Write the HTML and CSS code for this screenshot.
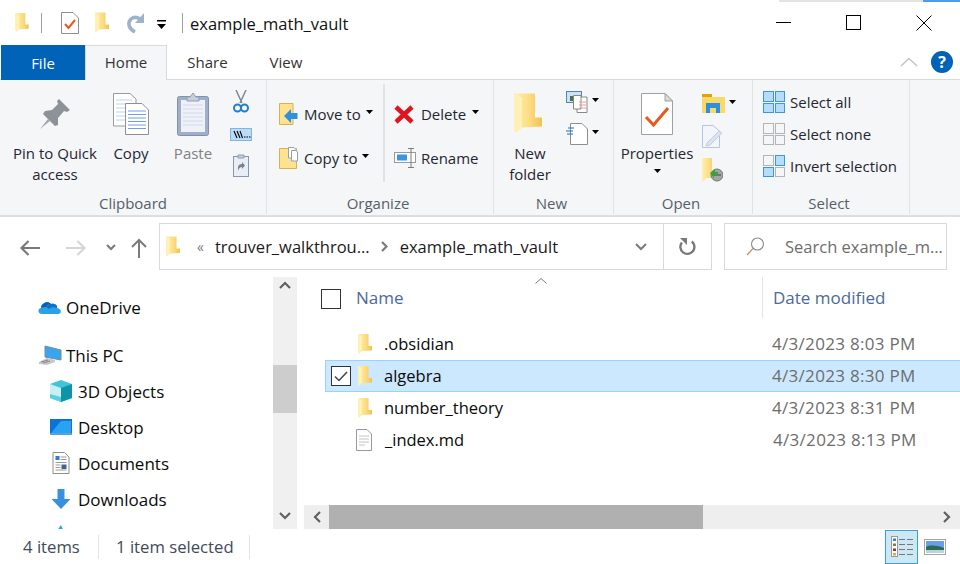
FILE: index.html
```html
<!DOCTYPE html>
<html>
    <head>
        <meta charset="UTF-8">
        <title>example_math_vault</title>
        <link rel="stylesheet" href="styles.css">
    </head>
    <body>
        <svg class="sprites" width="0" height="0">
            <defs>
                <linearGradient id="folderFill" x1="0" y1="0" x2="1" y2="0">
                    <stop offset="0" stop-color="#ffefb0"/>
                    <stop offset="0.55" stop-color="#fcdc80"/>
                    <stop offset="1" stop-color="#f0c252"/>
                </linearGradient>
                <symbol id="folder" viewBox="0 0 14 20">
                    <path d="M0 0H10.5V12H14V16.5L4 17L1.200 19.500L0 18.500Z" fill="url(#folderFill)"/>
                    <path d="M0 0L4 2V17L1.200 19.500L0 18.500Z" fill="#fff0b4"/>
                </symbol>
                <symbol id="caret" viewBox="0 0 9 5">
                    <path d="M0 0H9L4.500 5Z" fill="#000"/>
                </symbol>
                <symbol id="page" viewBox="0 0 32 42">
                    <path d="M.5.5H24L31.500 8V41.500H.5Z" fill="#fff" stroke="#a0a0a0"/>
                    <path d="M24 .5V8H31.500Z" fill="#dcdcdc" stroke="#a0a0a0"/>
                </symbol>
            </defs>
        </svg>

        <div class="strip"><span class="strip-blue"></span></div>

        <header class="titlebar">
            <svg class="qa qa-first" width="14" height="19"><use href="#folder"/></svg>
            <span class="qa-sep"></span>
            <svg class="qa qa-check" width="18" height="22" viewBox="0 0 18 22">
                <path d="M.5.5H12L17.500 6V21.500H.5Z" fill="#fff" stroke="#8f8f8f"/>
                <path d="M4 12L7.500 16L14 8" fill="none" stroke="#e8581c" stroke-width="2"/>
            </svg>
            <svg class="qa qa-folder" width="14" height="21"><use href="#folder"/></svg>
            <svg class="qa qa-undo" width="19" height="22" viewBox="0 0 19 22">
                <path d="M9 20C3 17 1 11 5 7C7.500 5 11 5 14 7" fill="none" stroke="#9fb2cc" stroke-width="3.500"/>
                <path d="M18 1V11H9Z" fill="#9fb2cc"/>
            </svg>
            <svg class="qa qa-more" width="9" height="9" viewBox="0 0 9 9">
                <path d="M0 0H9V1.500H0ZM0 4H9L4.500 9Z" fill="#000"/>
            </svg>
            <span class="qa-sep qa-sep-2"></span>
            <span class="title">example_math_vault</span>
            <div class="win-controls">
                <svg width="16" height="16" viewBox="0 0 16 16"><path d="M0 7.500H15" stroke="#000"/></svg>
                <svg width="16" height="16" viewBox="0 0 16 16"><rect x=".5" y=".5" width="14" height="14" fill="none" stroke="#000"/></svg>
                <svg width="16" height="16" viewBox="0 0 16 16"><path d="M.5.5L15.500 15.500M15.500.5L.5 15.500" stroke="#000"/></svg>
            </div>
        </header>

        <nav class="tabs">
            <span class="tab tab-file">File</span>
            <span class="tab tab-home">Home</span>
            <span class="tab tab-share">Share</span>
            <span class="tab tab-view">View</span>
            <svg class="collapse" width="18" height="10" viewBox="0 0 18 10"><path d="M1 9L9 1.500L17 9" fill="none" stroke="#c4c4c4" stroke-width="1.500"/></svg>
            <span class="help">?</span>
        </nav>

        <section class="ribbon">
            <div class="group group-clipboard">
                <div class="group-body">
                    <div class="big big-pin">
                        <div class="big-icon">
                            <svg width="32" height="32" viewBox="0 0 32 32">
                                <path d="M20 1L31 12L28 14L25 13L19 20L19 27L16 28L4 16L6 13L13 12L19 6L18 3Z" fill="#8c9298"/>
                                <path d="M9 21L1 31L11 23Z" fill="#a2a6ab"/>
                            </svg>
                        </div>
                        <span>Pin to Quick</span>
                        <span>access</span>
                    </div>
                    <div class="big big-copy">
                        <div class="big-icon">
                            <svg width="36" height="42" viewBox="0 0 36 42">
                                <path d="M.5.5H17L23 6V33H.5Z" fill="#fff" stroke="#9a9a9a"/>
                                <path d="M3 7H19M3 11H19M3 15H19M3 19H19M3 23H19M3 27H19" stroke="#bcd0ee"/>
                                <path d="M12.500 10.500H29L35.500 17V41.500H12.500Z" fill="#fff" stroke="#8f8f8f"/>
                                <path d="M15 18H33M15 21.500H33M15 25H33M15 28.500H33M15 32H33M15 35.500H33" stroke="#6f9eea"/>
                            </svg>
                        </div>
                        <span>Copy</span>
                    </div>
                    <div class="big big-paste">
                        <div class="big-icon">
                            <svg width="32" height="44" viewBox="0 0 32 44">
                                <rect x=".5" y="4.500" width="31" height="39" rx="2" fill="#9fafc9" stroke="#8091ad"/>
                                <rect x="4" y="8" width="24" height="32" fill="#eef1f8"/>
                                <path d="M6 13H26M6 17H26M6 21H26M6 25H26M6 29H26M6 33H26" stroke="#d3d9e6"/>
                                <path d="M10 9V5H13L16 1L19 5H22V9Z" fill="#c7cfdd" stroke="#8f9cb3"/>
                            </svg>
                        </div>
                        <span>Paste</span>
                    </div>
                    <div class="clip-tools">
                        <svg width="16" height="23" viewBox="0 0 16 23">
                            <path d="M3 0L9 13M13 0L7 13" stroke="#808a94" stroke-width="1.500"/>
                            <circle cx="4.500" cy="18" r="3.500" fill="none" stroke="#1e81ce" stroke-width="2"/>
                            <circle cx="11.500" cy="18" r="3.500" fill="none" stroke="#1e81ce" stroke-width="2"/>
                        </svg>
                        <svg class="tool-path" width="22" height="13" viewBox="0 0 22 13">
                            <rect x=".5" y=".5" width="21" height="12" fill="#b9dcf9" stroke="#80b5e0"/>
                            <path d="M4 3L7 10M7 3L10 10M10 3L12.500 10" stroke="#000" stroke-width="1.100"/>
                            <path d="M14 9H15.500M16.500 9H18M19 9H20.500" stroke="#000"/>
                        </svg>
                        <svg class="tool-short" width="16" height="23" viewBox="0 0 16 23">
                            <rect x=".5" y="2.500" width="15" height="20" fill="#e9edf6" stroke="#8796b0"/>
                            <path d="M5 4V1H11V4Z" fill="#c7cfdd" stroke="#8f9cb3"/>
                            <path d="M5 17V13C5 11 7 10 9 10V8L12 11.500L9 15V13C7 13 6 14 5 17Z" fill="#7d8288"/>
                        </svg>
                    </div>
                </div>
                <div class="group-label">Clipboard</div>
            </div>

            <div class="group group-organize">
                <div class="group-body">
                    <div class="org-col">
                        <div class="row">
                            <svg class="row-icon" width="19" height="22" viewBox="0 0 19 22">
                                <path d="M.5.500H14V21.500H.5Z" fill="#fde38f" stroke="#d9b24a"/>
                                <path d="M18.500 10H12V6L5 13L12 20V16H18.500Z" fill="#2f8fe0"/>
                            </svg>
                            <span>Move to</span>
                            <svg class="caret" width="7" height="4"><use href="#caret"/></svg>
                        </div>
                        <div class="row">
                            <svg class="row-icon" width="19" height="22" viewBox="0 0 19 22">
                                <path d="M.5 1.500H17.500V21.500H.5Z" fill="#fde38f" stroke="#d9b24a"/>
                                <path d="M9.500.5H15L17.500 3V11H9.500Z" fill="#fff" stroke="#8fa0b8"/>
                                <path d="M12.500 3.500H17L18.500 5V14H12.500Z" fill="#fff" stroke="#8fa0b8"/>
                            </svg>
                            <span>Copy to</span>
                            <svg class="caret" width="7" height="4"><use href="#caret"/></svg>
                        </div>
                    </div>
                    <div class="org-col org-col-2">
                        <div class="row">
                            <svg class="row-icon" width="20" height="19" viewBox="0 0 20 19">
                                <path d="M2 2L18 17M18 2L2 17" stroke="#e0141f" stroke-width="4.500"/>
                            </svg>
                            <span>Delete</span>
                            <svg class="caret caret-delete" width="7" height="4"><use href="#caret"/></svg>
                        </div>
                        <div class="row">
                            <svg class="row-icon row-icon-tight" width="22" height="20" viewBox="0 0 22 20">
                                <rect x=".5" y="4.500" width="21" height="10" fill="#fff" stroke="#9a9a9a"/>
                                <rect x="3" y="6.500" width="10" height="6" fill="#3d95e0"/>
                                <path d="M14 .5H20M17 .5V19.500M14 19.500H20" stroke="#7c7c7c" fill="none"/>
                            </svg>
                            <span>Rename</span>
                        </div>
                    </div>
                </div>
                <div class="group-label">Organize</div>
            </div>

            <div class="group group-new">
                <div class="group-body">
                    <div class="big big-new">
                        <div class="big-icon">
                            <svg width="28" height="41"><use href="#folder"/></svg>
                        </div>
                        <span>New</span>
                        <span>folder</span>
                    </div>
                    <div class="tiny-col">
                        <div class="tiny-row">
                            <svg class="tiny-icon" width="22" height="22" viewBox="0 0 22 22">
                                <rect x=".5" y=".5" width="15" height="11" fill="#c9e4f8" stroke="#4c87b5"/>
                                <path d="M4 10V5H7V10Z" fill="#4f6f4a"/>
                                <path d="M11 6H21V21.500H11Z" fill="#fff" stroke="#888"/>
                                <path d="M7.500 4.500H15V18H7.500Z" fill="#fff" stroke="#888"/>
                                <path d="M13 11H20M13 14H20M13 17H20" stroke="#e59a9a"/>
                            </svg>
                            <svg class="caret" width="7" height="4"><use href="#caret"/></svg>
                        </div>
                        <div class="tiny-row">
                            <svg class="tiny-icon" width="22" height="22" viewBox="0 0 22 22">
                                <path d="M4.500.5H16L21.500 6V21.500H4.500Z" fill="#fff" stroke="#8f8f8f"/>
                                <path d="M2 5H8M0 8H7M1 11H7" stroke="#1d6fc5" stroke-width="1.200"/>
                            </svg>
                            <svg class="caret" width="7" height="4"><use href="#caret"/></svg>
                        </div>
                    </div>
                </div>
                <div class="group-label">New</div>
            </div>

            <div class="group group-open">
                <div class="group-body">
                    <div class="big big-props">
                        <div class="big-icon">
                            <svg width="32" height="42" viewBox="0 0 32 42">
                                <use href="#page"/>
                                <path d="M5 24L12.500 32L27 15" fill="none" stroke="#e8581c" stroke-width="3"/>
                            </svg>
                        </div>
                        <span>Properties</span>
                        <svg class="caret caret-props" width="7" height="4"><use href="#caret"/></svg>
                    </div>
                    <div class="tiny-col tiny-col-open">
                        <div class="tiny-row">
                            <svg class="tiny-icon" width="23" height="19" viewBox="0 0 23 19">
                                <path d="M0 3H10V0H0Z" fill="#e0a30e"/>
                                <path d="M0 3H23V19H0Z" fill="#fbd968"/>
                                <rect x="4" y="9" width="14" height="10" fill="#2d8fe0"/>
                                <rect x="8" y="14" width="6" height="5" fill="#fbd968"/>
                            </svg>
                            <svg class="caret" width="7" height="4"><use href="#caret"/></svg>
                        </div>
                        <div class="tiny-row">
                            <svg class="tiny-icon" width="23" height="23" viewBox="0 0 23 23">
                                <path d="M.5.5H11L17.500 6V22.500H.5Z" fill="#f2f5fb" stroke="#b8c4dc"/>
                                <path d="M5 18L17 6L20 8L8 20L4 21Z" fill="#dbe3f1" stroke="#c2cde0"/>
                            </svg>
                        </div>
                        <div class="tiny-row">
                            <svg class="tiny-icon" width="21" height="24" viewBox="0 0 21 24">
                                <path d="M0 0H10V15H14V20H4L1.500 23.500L0 22Z" fill="url(#folderFill)"/>
                                <circle cx="15" cy="17" r="6" fill="#a4a4a4" stroke="#777"/>
                                <path d="M11 17H19" stroke="#444"/>
                                <path d="M8 15L13 11V14H16V17H12V20Z" fill="#37a43a"/>
                            </svg>
                        </div>
                    </div>
                </div>
                <div class="group-label">Open</div>
            </div>

            <div class="group group-select">
                <div class="group-body group-body-select">
                    <div class="sel-row">
                        <span class="sel-grid">
                            <i class="on"></i><i class="on"></i><i class="on"></i><i class="on"></i>
                        </span>
                        <span>Select all</span>
                    </div>
                    <div class="sel-row">
                        <span class="sel-grid">
                            <i></i><i></i><i></i><i></i>
                        </span>
                        <span>Select none</span>
                    </div>
                    <div class="sel-row">
                        <span class="sel-grid">
                            <i></i><i class="on"></i><i class="on"></i><i></i>
                        </span>
                        <span>Invert selection</span>
                    </div>
                </div>
                <div class="group-label">Select</div>
            </div>
        </section>

        <section class="addressbar">
            <svg class="nav-back" width="20" height="16" viewBox="0 0 20 16"><path d="M20 8H2M8.500 1L1.500 8L8.500 15" fill="none" stroke="#7a7a7a" stroke-width="2.200"/></svg>
            <svg class="nav-fwd" width="20" height="16" viewBox="0 0 20 16"><path d="M0 8H18M11.500 1L18.500 8L11.500 15" fill="none" stroke="#d6d6d6" stroke-width="2.200"/></svg>
            <svg class="nav-down" width="10" height="7" viewBox="0 0 10 7"><path d="M1 1L5 5L9 1" fill="none" stroke="#7a7a7a" stroke-width="2"/></svg>
            <svg class="nav-up" width="16" height="20" viewBox="0 0 16 20"><path d="M8 20V2M1 9L8 2L15 9" fill="none" stroke="#7a7a7a" stroke-width="2"/></svg>
            <div class="pathbox">
                <svg class="path-folder" width="14" height="21"><use href="#folder"/></svg>
                <span class="crumb-more">«</span>
                <span class="crumb">trouver_walkthrou...</span>
                <svg class="crumb-sep" width="7" height="11" viewBox="0 0 7 11"><path d="M1 1L5.500 5.500L1 10" fill="none" stroke="#7a7a7a" stroke-width="2.200"/></svg>
                <span class="crumb">example_math_vault</span>
                <svg class="path-chevron" width="12" height="8" viewBox="0 0 12 8"><path d="M1 1L6 6L11 1" fill="none" stroke="#7a7a7a" stroke-width="2"/></svg>
                <div class="path-refresh">
                    <svg width="17" height="18" viewBox="0 0 17 18">
                        <path d="M3.500 4A7 7 0 1 0 13.500 4" fill="none" stroke="#7a7a7a" stroke-width="2.400" transform="rotate(-6 8.500 10)"/>
                        <path d="M1 0H8V7Z" fill="#7a7a7a"/>
                    </svg>
                </div>
            </div>
            <div class="searchbox">
                <svg width="19" height="19" viewBox="0 0 19 19">
                    <circle cx="11.500" cy="7" r="6" fill="none" stroke="#8c8c8c" stroke-width="1.100"/>
                    <path d="M7 11.500L1 18" stroke="#d48a5a" stroke-width="1.200"/>
                </svg>
                <span>Search example_m...</span>
            </div>
        </section>

        <main class="main">
            <aside class="navpane">
                <div class="tree">
                    <div class="tree-row">
                        <svg width="25" height="16" viewBox="0 0 25 16">
                            <path d="M5 15C1 15 0 10 4 9C4 4 11 1 14 5C18 4 21 7 20 9C25 10 25 15 21 15Z" fill="#29a0e8"/>
                            <path d="M4 9C4 4 11 1 14 5C10 5 9 7 9 8C7 8 5 8 4 9Z" fill="#0a5fb4"/>
                            <path d="M14 5C18 4 21 7 20 9C17 8 14 8 12 10L9 8C9 7 10 5 14 5Z" fill="#0f72c9"/>
                        </svg>
                        <span>OneDrive</span>
                    </div>
                    <div class="tree-row tree-row-pc">
                        <svg width="24" height="21" viewBox="0 0 24 21">
                            <path d="M7 1L23 5V15L7 12Z" fill="#37a6ee" stroke="#7c8a96"/>
                            <path d="M1 17L9 13L17 15L17 17L9 20L1 19Z" fill="#c4c8cc"/>
                            <path d="M3 17L10 15M5 18L12 16" stroke="#888"/>
                        </svg>
                        <span>This PC</span>
                    </div>
                    <div class="tree-row tree-row-child">
                        <svg width="22" height="22" viewBox="0 0 22 22">
                            <path d="M11 0L22 4V18L11 22L0 18V4Z" fill="#3ec5d6"/>
                            <path d="M0 4L11 8V22L0 18Z" fill="#c8f0f4"/>
                            <path d="M11 8L22 4V18L11 22Z" fill="#0e93a8"/>
                            <path d="M0 14L11 17V22L0 18Z" fill="#58d0df"/>
                        </svg>
                        <span>3D Objects</span>
                    </div>
                    <div class="tree-row tree-row-child">
                        <svg width="22" height="16" viewBox="0 0 22 16">
                            <rect width="22" height="16" fill="#0a74d6"/>
                            <path d="M1 14L11 2H21V14Z" fill="#2aa2f2"/>
                            <path d="M0 15H22" stroke="#9fd0f5"/>
                        </svg>
                        <span>Desktop</span>
                    </div>
                    <div class="tree-row tree-row-child">
                        <svg width="22" height="22" viewBox="0 0 17 22">
                            <path d="M.5.5H12L16.500 5V21.500H.5Z" fill="#fff" stroke="#8f8f8f"/>
                            <path d="M3 4H7V8H3Z" fill="#2a7fd0"/>
                            <path d="M8 5H14M8 7.500H14M3 10.500H14M3 13H8M3 15.500H8M3 18H14" stroke="#9a9a9a"/>
                            <path d="M9 12.500H14V17H9Z" fill="#41648a"/>
                        </svg>
                        <span>Documents</span>
                    </div>
                    <div class="tree-row tree-row-child">
                        <svg width="22" height="20" viewBox="0 0 19 20">
                            <path d="M6 0H13V10H19L9.500 20L0 10H6Z" fill="#3a8fe0"/>
                        </svg>
                        <span>Downloads</span>
                    </div>
                    <div class="tree-row tree-row-child">
                        <svg width="22" height="20" viewBox="0 0 19 20">
                            <path d="M9.500 0L13 8V20H4V8Z" fill="#1ea7ee"/>
                        </svg>
                        <span></span>
                    </div>
                </div>
                <div class="vscroll">
                    <svg class="v-arrow" width="12" height="8" viewBox="0 0 12 8"><path d="M1 7L6 2L11 7" fill="none" stroke="#606060" stroke-width="2.200"/></svg>
                    <div class="v-track"><div class="v-thumb"></div></div>
                    <svg class="v-arrow" width="12" height="8" viewBox="0 0 12 8"><path d="M1 1L6 6L11 1" fill="none" stroke="#606060" stroke-width="2.200"/></svg>
                </div>
            </aside>

            <div class="filepane">
                <div class="listhead">
                    <span class="checkbox"></span>
                    <span class="col-name">Name</span>
                    <svg class="sort" width="12" height="6" viewBox="0 0 12 6"><path d="M.5 5.500L6 .5L11.500 5.500" fill="none" stroke="#7a7a7a"/></svg>
                    <span class="col-date">Date modified</span>
                </div>
                <div class="filelist">
                    <div class="file">
                        <span class="check-slot"></span>
                        <svg class="file-icon" width="14" height="20"><use href="#folder"/></svg>
                        <span class="file-name">.obsidian</span>
                        <span class="file-date">4/3/2023 8:03 PM</span>
                    </div>
                    <div class="file file-selected">
                        <span class="check-slot checkbox-on">
                            <svg width="14" height="11" viewBox="0 0 14 11"><path d="M1 5.500L5 9.500L13 1" fill="none" stroke="#444" stroke-width="1.500"/></svg>
                        </span>
                        <svg class="file-icon" width="14" height="20"><use href="#folder"/></svg>
                        <span class="file-name">algebra</span>
                        <span class="file-date">4/3/2023 8:30 PM</span>
                    </div>
                    <div class="file">
                        <span class="check-slot"></span>
                        <svg class="file-icon" width="14" height="20"><use href="#folder"/></svg>
                        <span class="file-name">number_theory</span>
                        <span class="file-date">4/3/2023 8:31 PM</span>
                    </div>
                    <div class="file">
                        <span class="check-slot"></span>
                        <svg class="file-icon" width="16" height="22" viewBox="0 0 16 22">
                            <path d="M.5.5H11L15.500 5V21.500H.5Z" fill="#fff" stroke="#9a9a9a"/>
                            <path d="M3 7H13M3 10H13M3 13H13M3 16H9" stroke="#c4c4c4"/>
                        </svg>
                        <span class="file-name">_index.md</span>
                        <span class="file-date">4/3/2023 8:13 PM</span>
                    </div>
                </div>
                <div class="hscroll">
                    <svg class="h-arrow" width="8" height="12" viewBox="0 0 8 12"><path d="M7 1L2 6L7 11" fill="none" stroke="#606060" stroke-width="2.200"/></svg>
                    <div class="h-thumb"></div>
                    <svg class="h-arrow h-arrow-right" width="8" height="12" viewBox="0 0 8 12"><path d="M1 1L6 6L1 11" fill="none" stroke="#606060" stroke-width="2.200"/></svg>
                </div>
            </div>
        </main>

        <footer class="status">
            <span class="status-count">4 items</span>
            <span class="status-selected">1 item selected</span>
            <span class="status-rule"></span>
            <div class="view-details">
                <svg width="22" height="21" viewBox="0 0 22 21">
                    <rect x=".5" y=".5" width="6" height="20" fill="#fff" stroke="#999"/>
                    <path d="M2 2.500H5V5H2Z" fill="#3f7f9f"/>
                    <path d="M2 7.500H5V10H2Z" fill="#8a7a40"/>
                    <path d="M2 12.500H5V15H2Z" fill="#b0281c"/>
                    <path d="M2 17H5V19.500H2Z" fill="#c8b050"/>
                    <path d="M8 3.500H14M16 3.500H22M8 8.500H14M16 8.500H22M8 13.500H14M16 13.500H22M8 18.500H14M16 18.500H22" stroke="#777"/>
                </svg>
            </div>
            <svg class="view-large" width="22" height="16" viewBox="0 0 22 16">
                <rect x=".5" y=".5" width="21" height="15" fill="#fff" stroke="#a4a4a4"/>
                <rect x="2" y="2" width="18" height="12" fill="#6b9ee8"/>
                <path d="M2 8C6 6 12 6 20 9V14H2Z" fill="#2f6a52"/>
                <path d="M2 11H20V14H2Z" fill="#b9d3e0"/>
            </svg>
        </footer>
    </body>
</html>
```

FILE: styles.css
```css
body{
    margin: 0;
    width: 960px;
    height: 564px;
    overflow: hidden;
    background-color: #FFF;
    font-family: "Open Sans", sans-serif;
    font-size: 15px;
    color: #1f2733;
    position: relative;
}
svg{
    display: block;
    flex: none;
}
.sprites{
    position: absolute;
}
.strip{
    position: absolute;
    top: 0;
    left: 779px;
    width: 181px;
    height: 2px;
    background-color: #e4e4e4;
}
.strip-blue{
    position: absolute;
    right: 0;
    width: 37px;
    height: 2px;
    background-color: #4a9cf0;
}

/* title bar */
.titlebar{
    height: 45px;
    display: flex;
    align-items: center;
}
.qa-first{
    margin-left: 15px;
}
.qa-sep{
    width: 1px;
    height: 20px;
    margin-left: 12px;
    background-color: #a0a0a0;
}
.qa-check{
    margin-left: 19px;
}
.qa-folder{
    margin-left: 16px;
}
.qa-undo{
    margin-left: 17px;
}
.qa-more{
    margin-left: 12px;
    margin-top: 4px;
}
.qa-sep-2{
    margin-left: 16px;
}
.title{
    margin-left: 7px;
    margin-top: 2px;
    font-size: 16.500px;
    color: #111;
}
.win-controls{
    margin-left: auto;
    margin-right: 28px;
    display: flex;
    gap: 54px;
}

/* tabs */
.tabs{
    height: 35px;
    box-sizing: border-box;
    border-bottom: 1px solid #d9d9d9;
    display: flex;
    align-items: stretch;
    position: relative;
}
.tab{
    display: flex;
    align-items: center;
    justify-content: center;
    font-size: 15px;
    color: #333;
}
.tab-file{
    margin-left: 1px;
    width: 84px;
    background-color: #0063b8;
    color: #FFF;
    margin-bottom: -1px;
}
.tab-home{
    width: 82px;
    box-sizing: border-box;
    background-color: #f5f6f7;
    border: 1px solid #d9d9d9;
    border-bottom: 0;
    margin-bottom: -1px;
    padding-bottom: 2px;
}
.tab-share{
    width: 81px;
}
.tab-view{
    width: 76px;
}
.collapse{
    align-self: center;
    margin-left: auto;
    margin-right: 13px;
}
.help{
    align-self: center;
    width: 22px;
    height: 22px;
    margin-right: 7px;
    border-radius: 50%;
    background-color: #0063b8;
    color: #FFF;
    font-size: 16px;
    font-weight: 700;
    line-height: 22px;
    text-align: center;
}

/* ribbon */
.ribbon{
    height: 137px;
    box-sizing: border-box;
    background-color: #f5f6f7;
    border-bottom: 2px solid #dddedf;
    display: flex;
    font-size: 15px;
}
.group{
    box-sizing: border-box;
    padding-top: 4px;
    border-right: 1px solid #e1e3e6;
    display: flex;
    flex-direction: column;
    height: 134px;
}
.group-clipboard{ width: 267px; }
.group-organize{ width: 227px; }
.group-new{ width: 120px; }
.group-open{ width: 139px; }
.group-select{ width: 157px; }
.group-body{
    height: 108px;
    display: flex;
}
.group-label{
    text-align: center;
    line-height: 22px;
    color: #555f6b;
    padding-right: 4px;
}
.group-clipboard .group-label{
    padding-right: 0;
}
.big{
    display: flex;
    flex-direction: column;
    align-items: center;
    line-height: 21px;
}
.big-icon{
    height: 59px;
    display: flex;
    align-items: center;
    justify-content: center;
}
.group-clipboard .group-body{
    padding-left: 13px;
}
.big-pin{ width: 84px; white-space: nowrap; }
.big-copy{ width: 50px; margin-left: 9px; }
.big-paste{ width: 50px; margin-left: 12px; color: #7d8186; }
.clip-tools{
    width: 30px;
    margin-left: 8px;
    padding-top: 6px;
    display: flex;
    flex-direction: column;
    align-items: center;
}
.tool-path{ margin-top: 15px; }
.tool-short{ margin-top: 13px; }

.org-col{
    width: 105px;
    margin-left: 12px;
    padding-top: 8px;
    box-sizing: content-box;
    height: 90px;
}
.org-col-2{
    width: 100px;
    margin-left: 0;
    padding-left: 9px;
    border-left: 2px solid #e1e3e6;
}
.row{
    height: 44px;
    display: flex;
    align-items: center;
}
.row-icon{ margin-right: 7px; }
.row-icon-tight{ margin-right: 5px; }
.org-col:first-child .row-icon{ margin-right: 6px; }
.caret{ margin-left: 5px; margin-top: -4px; }
.caret-delete{ margin-left: 6px; }

.big-new{ width: 60px; margin-left: 6px; }
.big-new svg{ margin-right: 4px; }
.tiny-col{
    margin-left: 6px;
    padding-top: 2px;
}
.tiny-row{
    height: 32px;
    display: flex;
    align-items: center;
}
.tiny-row .caret{ margin-left: 4px; }

.big-props{ width: 84px; margin-left: 1px; }
.caret-props{ margin: 5px 0 0 0; }
.tiny-col-open{
    margin-left: 3px;
    padding-top: 3px;
}
.tiny-col-open .tiny-row{ height: 33px; }

.group-body-select{
    flex-direction: column;
    padding: 2px 0 0 10px;
    box-sizing: border-box;
}
.sel-row{
    height: 32px;
    display: flex;
    align-items: center;
    gap: 5px;
}
.sel-grid{
    width: 22px;
    height: 22px;
    display: grid;
    grid-template-columns: 1fr 1fr;
    gap: 1px;
}
.sel-grid i{
    border: 1px solid #b4b4b4;
    background-color: #f5f6f7;
}
.sel-grid i.on{
    border-color: #3d95dc;
    background-color: #b5dcfb;
}

/* address bar */
.addressbar{
    height: 47px;
    margin-top: 6px;
    display: flex;
    align-items: center;
}
.nav-back{ margin-left: 20px; margin-top: 2px; }
.nav-fwd{ margin-left: 26px; margin-top: 2px; }
.nav-down{ margin-left: 20px; margin-top: 2px; }
.nav-up{ margin-left: 15px; margin-top: 2px; }
.pathbox{
    margin-left: 12px;
    width: 553px;
    height: 47px;
    box-sizing: border-box;
    border: 1px solid #d9d9d9;
    display: flex;
    align-items: center;
    font-size: 16.500px;
    color: #1a1a1a;
}
.path-folder{ margin-left: 6px; }
.crumb-more{
    margin-left: 17px;
    color: #7a7a7a;
    font-size: 14px;
}
.crumb{ margin-left: 11px; }
.crumb-sep{ margin-left: 11px; }
.crumb-sep + .crumb{ margin-left: 12px; }
.path-chevron{
    margin-left: auto;
    margin-right: 16px;
}
.path-refresh{
    width: 47px;
    height: 45px;
    border-left: 1px solid #d9d9d9;
    display: flex;
    align-items: center;
    justify-content: center;
}
.searchbox{
    margin-left: 12px;
    width: 223px;
    height: 47px;
    box-sizing: border-box;
    border: 1px solid #d9d9d9;
    display: flex;
    align-items: center;
    padding-left: 21px;
    gap: 20px;
    color: #6d6d6d;
    font-size: 16.500px;
    white-space: nowrap;
}

/* panes */
.main{
    margin-top: 7px;
    height: 252px;
    display: flex;
}
.navpane{
    width: 297px;
    display: flex;
    overflow: hidden;
}
.tree{
    width: 273px;
    padding-top: 12px;
    box-sizing: border-box;
    font-size: 17px;
    color: #0a0a0a;
}
.tree-row{
    height: 36px;
    display: flex;
    align-items: center;
    padding-left: 37px;
    gap: 4px;
}
.tree-row-pc{
    margin-top: 12px;
    padding-left: 38px;
}
.tree-row-child{
    padding-left: 50px;
}
.tree-row-child svg{
    margin-right: 2px;
}
.vscroll{
    width: 24px;
    background-color: #f0f0f0;
    display: flex;
    flex-direction: column;
    align-items: center;
    padding: 4px 0 9px;
    box-sizing: border-box;
}
.v-track{
    flex: 1;
    width: 100%;
    padding-top: 76px;
    box-sizing: border-box;
}
.v-thumb{
    height: 48px;
    background-color: #cdcdcd;
}
.filepane{
    margin-left: 6px;
    flex: 1;
    display: flex;
    flex-direction: column;
    min-width: 0;
}
.listhead{
    height: 43px;
    flex: none;
    display: flex;
    align-items: center;
    position: relative;
    color: #4c6a99;
    font-size: 17px;
}
.checkbox{
    width: 18px;
    height: 18px;
    margin-left: 18px;
    border: 1px solid #333;
}
.col-name{
    margin-left: 15px;
    width: 406px;
    margin-top: -2px;
}
.sort{
    position: absolute;
    left: 232px;
    top: 1px;
}
.col-date{
    height: 41px;
    line-height: 42px;
    margin-top: -2px;
    border-left: 1px solid #e4e4e4;
    padding-left: 10px;
}
.filelist{
    flex: 1;
    padding-top: 8px;
    min-height: 0;
    box-sizing: border-box;
}
.file{
    height: 32px;
    display: flex;
    align-items: center;
    margin-left: 22px;
    box-sizing: border-box;
    font-size: 16.500px;
    color: #0a0a0a;
}
.file-selected{
    background-color: #cce8ff;
    border: 1px solid #99d1ff;
    border-right: 0;
}
.check-slot{
    width: 20px;
    height: 20px;
    flex: none;
    margin-left: 6px;
    box-sizing: border-box;
    display: flex;
    align-items: center;
    justify-content: center;
}
.file-selected .check-slot{
    margin-left: 5px;
}
.checkbox-on{
    background-color: #FFF;
    border: 1px solid #333;
}
.file-icon{
    margin-left: 7px;
    flex: none;
}
.file-name{
    margin-left: 12px;
    margin-bottom: 2px;
    width: 388px;
}
.file:last-child .file-icon{
    margin-left: 5px;
}
.file:last-child .file-name{
    margin-left: 13px;
}
.file-date{
    color: #6d6d6d;
    white-space: nowrap;
    font-size: 17px;
    letter-spacing: .3px;
    margin-bottom: 2px;
}
.hscroll{
    height: 24px;
    flex: none;
    margin-left: 1px;
    background-color: #eeeeee;
    display: flex;
    align-items: center;
}
.h-arrow{
    margin-left: 9px;
}
.h-thumb{
    width: 374px;
    height: 100%;
    margin-left: 8px;
    background-color: #b0b0b0;
}
.h-arrow-right{
    margin-left: auto;
    margin-right: 9px;
}

/* status bar */
.status{
    height: 35px;
    display: flex;
    align-items: center;
    font-size: 16.700px;
    color: #3f4a59;
}
.status-count{
    width: 75px;
    margin-left: 23px;
    border-right: 1px solid #e4e4e4;
    line-height: 24px;
}
.status-selected{
    width: 133px;
    margin-left: 17px;
    border-right: 1px solid #e4e4e4;
    line-height: 24px;
}
.status-rule{
    flex: 1;
}
.view-details{
    width: 33px;
    height: 34px;
    box-sizing: border-box;
    background-color: #cce8f5;
    border: 1px solid #3b9fd0;
    display: flex;
    align-items: center;
    justify-content: center;
}
.view-large{
    margin-left: 6px;
    margin-right: 14px;
}
```
